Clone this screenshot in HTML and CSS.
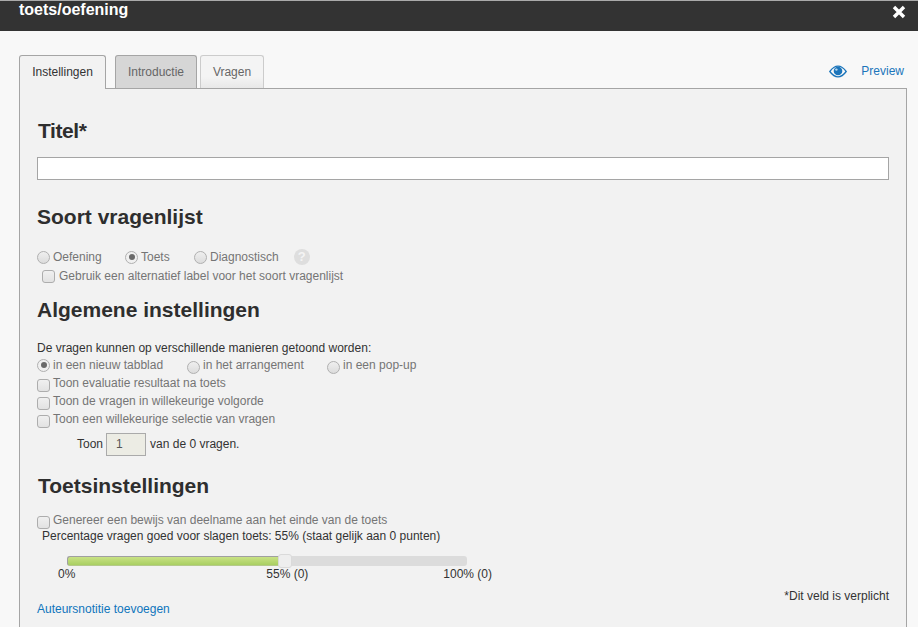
FILE: index.html
```html
<!DOCTYPE html>
<html lang="nl">
<head>
<meta charset="utf-8">
<title>toets/oefening</title>
<link rel="stylesheet" href="styles.css">
</head>
<body>
<header class="topbar">
  <span class="topbar-title">toets/oefening</span>
  <svg class="close" width="14" height="14" viewBox="0 0 14 14" aria-label="Sluiten"><path d="M2 2 12 12M12 2 2 12" stroke="#fff" stroke-width="3.4" fill="none"/></svg>
</header>
<main class="content">
  <nav class="tabbar">
    <a class="tab tab-active">Instellingen</a>
    <a class="tab tab-dark">Introductie</a>
    <a class="tab tab-light">Vragen</a>
    <a class="preview">
      <svg width="18" height="13" viewBox="0 0 18 13"><path d="M.8 6.500C3.500 2.800 6.200 1.200 9 1.200S14.500 2.800 17.200 6.500C14.500 10.200 11.800 11.800 9 11.800S3.500 10.200 .8 6.500Z" fill="none" stroke="#1b75bb" stroke-width="1.300"/><circle cx="9" cy="6" r="4.300" fill="#1b75bb"/><circle cx="7.400" cy="4.600" r="1.200" fill="#bcd8ee"/></svg>
      <span class="preview-label">Preview</span>
    </a>
  </nav>
  <section class="panel">
    <h2 class="h-titel">Titel*</h2>
    <input class="title-input" type="text">
    <h2 class="h-soort">Soort vragenlijst</h2>
    <div class="row row-types">
      <label class="opt opt-o"><span class="radio"></span>Oefening</label>
      <label class="opt opt-t"><span class="radio on"></span>Toets</label>
      <label class="opt opt-d"><span class="radio"></span>Diagnostisch</label>
      <span class="help">?</span>
    </div>
    <div class="row row-alt"><label class="opt"><span class="check"></span>Gebruik een alternatief label voor het soort vragenlijst</label></div>
    <h2 class="h-alg">Algemene instellingen</h2>
    <p class="row row-dark row-intro">De vragen kunnen op verschillende manieren getoond worden:</p>
    <div class="row row-modes">
      <label class="opt opt-m1"><span class="radio on"></span>in een nieuw tabblad</label>
      <label class="opt opt-m2"><span class="radio low"></span>in het arrangement</label>
      <label class="opt"><span class="radio low"></span>in een pop-up</label>
    </div>
    <div class="row"><label class="opt"><span class="check low"></span>Toon evaluatie resultaat na toets</label></div>
    <div class="row"><label class="opt"><span class="check low"></span>Toon de vragen in willekeurige volgorde</label></div>
    <div class="row"><label class="opt"><span class="check low"></span>Toon een willekeurige selectie van vragen</label></div>
    <div class="row row-dark row-toon">Toon <input class="num" type="text" value="1" disabled> van de 0 vragen.</div>
    <h2 class="h-toets">Toetsinstellingen</h2>
    <div class="row row-gen"><label class="opt"><span class="check low"></span>Genereer een bewijs van deelname aan het einde van de toets</label></div>
    <p class="row row-dark row-pct">Percentage vragen goed voor slagen toets: 55% (staat gelijk aan 0 punten)</p>
    <div class="slider"><div class="fill"></div><div class="thumb"></div></div>
    <div class="scale"><span>0%</span><span class="mid">55% (0)</span><span>100% (0)</span></div>
    <p class="required">*Dit veld is verplicht</p>
    <a class="note">Auteursnotitie toevoegen</a>
  </section>
</main>
</body>
</html>
```
FILE: styles.css
```css
* { box-sizing: border-box; }
html, body { margin: 0; height: 100%; overflow: hidden; }
body { background: #f8f8f8; font: 12px/18px "Liberation Sans", Arial, sans-serif; color: #757575; }
.topbar { height: 31px; background: #333; border-top: 1px solid #aaa; padding: 0 12px 0 19px; display: flex; justify-content: space-between; color: #fff; }
.topbar-title { font-size: 16px; font-weight: bold; line-height: 18px; }
.close { margin-top: 4px; }
.content { padding: 24px 11px 0 19px; }
.tabbar { display: flex; align-items: flex-start; height: 33px; position: relative; z-index: 1; }
.tab { height: 33px; border: 1px solid #bbb; border-bottom: 0; border-radius: 3px 3px 0 0; line-height: 32px; text-align: center; }
.tab-active { width: 87px; background: #f2f2f2; border-color: #a5a5a5; color: #333; height: 34px; }
.tab-dark { width: 82px; margin-left: 9px; background: #d6d6d6; border-color: #a5a5a5; color: #666; }
.tab-light { width: 64px; margin-left: 3px; background: linear-gradient(#f4f4f4 65%, #e8e8e8); border-color: #ccc; color: #666; }
.preview { margin-left: auto; display: flex; align-items: center; color: #1b75bb; padding: 7px 3px 0 0; }
.preview-label { margin-left: 14px; }
.panel { height: 540px; background: #f2f2f2; border: 1px solid #a5a5a5; padding: 0 17px; }
h2 { margin: 0; color: #2e2e2e; font-size: 21px; line-height: 24px; font-weight: bold; }
.h-titel { margin: 30px 0 0 1px; letter-spacing: -.4px; }
.title-input { display: block; width: 852px; height: 23px; margin-top: 14px; background: #fff; border: 1px solid #a5a5a5; padding: 0; }
.h-soort { margin-top: 25px; }
.row { margin: 0; height: 18px; display: flex; align-items: center; }
.row-dark { color: #333; }
.row-types { margin-top: 19px; }
.row-alt { margin-top: 1px; padding-left: 5px; }
.h-alg { margin-top: 13px; }
.row-intro { margin-top: 17px; }
.row-modes { margin-top: -1px; }
.opt { display: inline-flex; align-items: center; }
.opt-o { width: 88px; }
.opt-t { width: 69px; }
.opt-m1 { width: 150px; }
.opt-m2 { width: 140px; }
.radio { width: 13px; height: 13px; margin-right: 3px; border-radius: 50%; border: 1px solid #b0b0b0; background: linear-gradient(#efefef, #dcdcdc); display: inline-block; position: relative; }
.radio.on { background: #f0f0f0; }
.radio.on::after { content: ""; position: absolute; left: 2.5px; top: 2.5px; width: 6px; height: 6px; border-radius: 50%; background: #6a6a6a; }
.radio.low { transform: translateY(2px); }
.check { width: 13px; height: 13px; margin-right: 3px; border-radius: 3px; border: 1px solid #adadad; background: linear-gradient(#f0f0f0, #e2e2e2); display: inline-block; }
.row-alt .check { margin-right: 4px; }
.check.low { transform: translateY(2px); }
.help { width: 16px; height: 16px; margin-left: 15px; border-radius: 50%; background: #dedede; color: #f4f4f4; font-size: 13px; font-weight: bold; line-height: 16px; text-align: center; }
.row-toon { height: 24px; margin-top: 4px; padding-left: 40px; }
.num { width: 40px; height: 23px; margin: 0 4px 0 3px; background: #ecece4; border: 1px solid #aaa; color: #555; font: 12px "Liberation Sans", Arial, sans-serif; padding: 0 0 0 9px; }
.h-toets { margin: 18px 0 0 1px; }
.row-gen { margin-top: 13px; }
.row-pct { margin-top: -2px; padding-left: 5px; }
.slider { position: relative; width: 400px; height: 10px; margin: 11px 0 0 30px; background: #dcdcdc; border-radius: 3px; }
.fill { width: 55%; height: 100%; background: linear-gradient(#c9e285, #a9cf62); border: 1px solid #a0a0a0; border-right: 0; border-bottom-color: #b5c98a; border-radius: 3px 0 0 3px; }
.thumb { position: absolute; left: 211px; top: -2px; width: 14px; height: 14px; background: #eee; border: 1px solid #dadada; border-radius: 3px; }
.scale { display: flex; justify-content: space-between; width: 434px; margin: -1px 0 0 21px; color: #333; height: 18px; }
.mid { margin-left: 56px; }
.required { margin: 4px 0 0; text-align: right; color: #333; }
.note { display: block; margin-top: -5px; color: #0f75bc; }
```
